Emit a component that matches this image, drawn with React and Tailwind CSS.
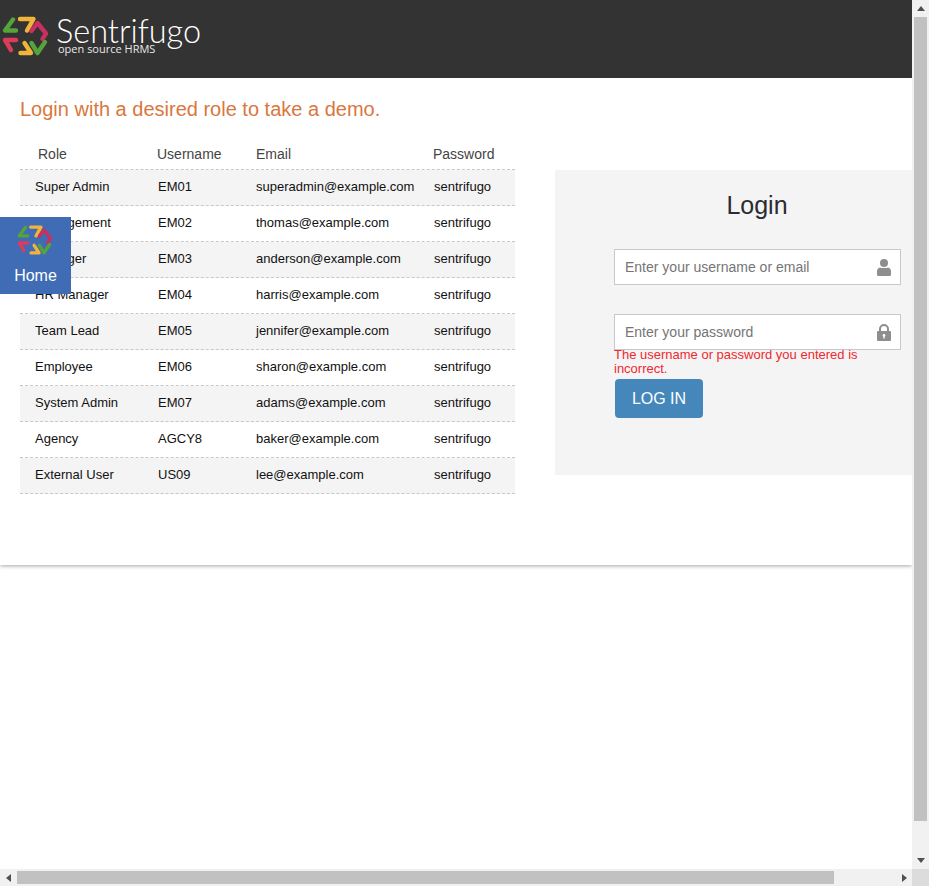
const users = [
  ["Super Admin", "EM01", "superadmin@example.com"],
  ["Management", "EM02", "thomas@example.com"],
  ["Manager", "EM03", "anderson@example.com"],
  ["HR Manager", "EM04", "harris@example.com"],
  ["Team Lead", "EM05", "jennifer@example.com"],
  ["Employee", "EM06", "sharon@example.com"],
  ["System Admin", "EM07", "adams@example.com"],
  ["Agency", "AGCY8", "baker@example.com"],
  ["External User", "US09", "lee@example.com"],
];

function Logo({ className }) {
  return (
    <svg viewBox="2 -1 50 42" className={className} fill="none" strokeWidth="4.4" strokeLinecap="round" strokeLinejoin="round">
      <path d="M13 3.5 L5 14.5 H16" stroke="#55a33a" />
      <path d="M20 3 H33.5 L27 14.5" stroke="#f0b43c" />
      <path d="M31.5 15 L37.5 7 L46 17.5 L42.5 23" stroke="#c9305f" />
      <path d="M16 24 H5 L11 34" stroke="#dd3b5c" />
      <path d="M24.5 27 L31 37 H20.5" stroke="#f0b43c" />
      <path d="M31.5 27 L37.5 37 L45 26" stroke="#55a33a" />
    </svg>
  );
}

function UserIcon() {
  return (
    <svg viewBox="0 0 14 17" className="h-[17px] w-[14px]" fill="#8e8e8e">
      <circle cx="7" cy="4" r="4" />
      <path d="M3 8.5 C4 9.3 10 9.3 11 8.5 C13 9 14 10.5 14 12 V15.5 Q14 17 12.5 17 H1.5 Q0 17 0 15.5 V12 C0 10.5 1 9 3 8.5 Z" />
    </svg>
  );
}

function LockIcon() {
  return (
    <svg viewBox="0 0 14 17" className="h-[17px] w-[14px]">
      <path d="M3 8 V5 a4 4 0 0 1 8 0 V8" fill="none" stroke="#8e8e8e" strokeWidth="2" />
      <path d="M1 7 H13 Q14 7 14 8 V16 Q14 17 13 17 H1 Q0 17 0 16 V8 Q0 7 1 7 Z M7 10 a1.4 1.4 0 0 0 -.7 2.6 V14.5 H7.7 V12.6 A1.4 1.4 0 0 0 7 10 Z" fill="#8e8e8e" fillRule="evenodd" />
    </svg>
  );
}

function Arrow({ points, className }) {
  return (
    <svg viewBox="0 0 10 10" className={className} fill="#505050">
      <polygon points={points} />
    </svg>
  );
}

function Field({ placeholder, icon }) {
  return (
    <div className="flex h-[36px] w-[287px] items-center border border-[#c8c8c8] bg-white pl-[10px] pr-[9px]">
      <input
        placeholder={placeholder}
        className="min-w-0 flex-1 bg-transparent text-[14px] outline-none placeholder:text-[#757575]"
      />
      {icon}
    </div>
  );
}

export default function App() {
  return (
    <div className="flex h-screen w-full flex-col overflow-hidden bg-white font-['Liberation_Sans',Arial,sans-serif]">
      <div className="flex h-[869px]">
        <div className="relative w-[912px] overflow-hidden">
          <div className="h-[565px] shadow-[0_1px_4px_rgba(0,0,0,0.35)]">
            <header className="flex h-[78px] items-start bg-[#333333] pl-[2px] pt-[15px]">
              <Logo className="h-[42px] w-[50px]" />
              <div className="ml-[4px] flex flex-col pt-[3px] text-white">
                <span className="font-['Lato',sans-serif] text-[32.5px] leading-[25px] font-light">Sentrifugo</span>
                <span className="ml-[2px] font-['Open_Sans',sans-serif] text-[11px] leading-[12px] text-[#e8e8e8]">open source HRMS</span>
              </div>
            </header>

            <main className="flex pl-[20px]">
              <section className="w-[495px]">
                <h1 className="mt-[19px] text-[20px] leading-[24px] text-[#d9773e]">Login with a desired role to take a demo.</h1>
                <div className="mt-[20px] grid h-[29px] grid-cols-[137px_99px_177px_82px] items-center border-b border-dashed border-[#c8c8c8] pb-[1px] text-[14px] text-[#444444]">
                  <span className="pl-[18px]">Role</span>
                  <span>Username</span>
                  <span>Email</span>
                  <span>Password</span>
                </div>
                {users.map((u, i) => (
                  <div
                    key={u[1]}
                    className={
                      "grid h-[36px] grid-cols-[138px_98px_178px_81px] items-center border-b border-dashed border-[#c8c8c8] pb-[2px] text-[13px] text-[#111111] " +
                      (i % 2 === 0 ? "bg-[#f4f4f4]" : "bg-white")
                    }
                  >
                    <span className="pl-[15px]">{u[0]}</span>
                    <span>{u[1]}</span>
                    <span>{u[2]}</span>
                    <span>sentrifugo</span>
                  </div>
                ))}
              </section>

              <section className="ml-[40px] mt-[92px] h-[305px] w-[357px] bg-[#f4f4f4]">
                <h2 className="pt-[20px] pl-[47px] text-center text-[25px] leading-[30px] text-[#2b2b33]">Login</h2>
                <div className="ml-[59px] mt-[29px]">
                  <Field placeholder="Enter your username or email" icon={<UserIcon />} />
                  <div className="mt-[29px]">
                    <Field placeholder="Enter your password" icon={<LockIcon />} />
                  </div>
                  <p className="-mt-[2px] w-[287px] text-[13px] leading-[14px] text-[#f0282f]">
                    The username or password you entered is incorrect.
                  </p>
                  <button className="ml-[1px] mt-[3px] h-[39px] w-[88px] rounded-[4px] bg-[#4587bb] text-[16px] text-white">LOG IN</button>
                </div>
              </section>
            </main>
          </div>

          <a className="absolute left-0 top-[217px] flex h-[77px] w-[71px] flex-col items-center bg-[#3f6cb5] pt-[5px] text-[16px] leading-[20px] text-white">
            <Logo className="h-[36px] w-[38px]" />
            <span className="mt-[8px]">Home</span>
          </a>
        </div>

        <div className="flex w-[17px] flex-col bg-[#f1f1f1]">
          <div className="flex h-[17px] items-center justify-center">
            <Arrow points="5,2 9,7 1,7" className="h-[10px] w-[10px]" />
          </div>
          <div className="mx-[2px] h-[804px] bg-[#c1c1c1]" />
          <div className="flex flex-1 items-end justify-center pb-[4px]">
            <Arrow points="1,3 9,3 5,8" className="h-[10px] w-[10px]" />
          </div>
        </div>
      </div>

      <div className="flex h-[17px] bg-[#f1f1f1]">
        <div className="flex w-[17px] items-center justify-center">
          <Arrow points="7,1 7,9 2,5" className="h-[10px] w-[10px]" />
        </div>
        <div className="my-[2px] w-[817px] bg-[#c1c1c1]" />
        <div className="flex flex-1 items-center justify-end pr-[3px]">
          <Arrow points="3,1 8,5 3,9" className="h-[10px] w-[10px]" />
        </div>
        <div className="w-[17px] bg-[#dcdcdc]" />
      </div>
    </div>
  );
}
